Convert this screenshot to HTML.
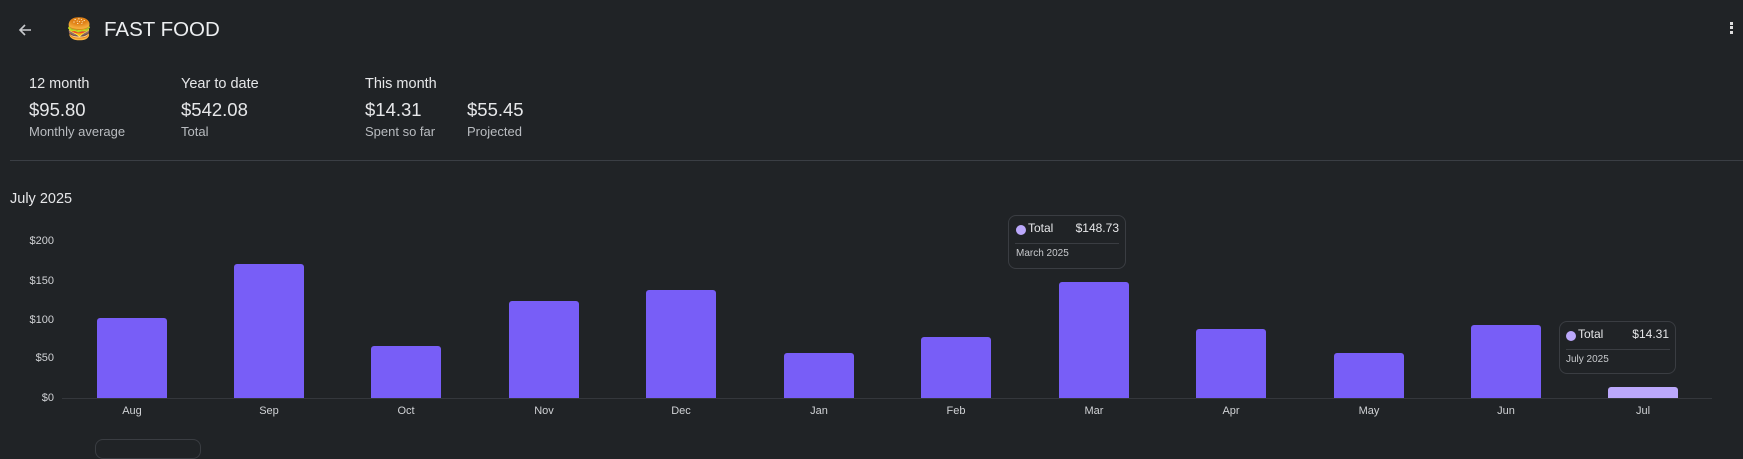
<!DOCTYPE html>
<html><head><meta charset="utf-8"><style>
*{margin:0;padding:0;box-sizing:border-box}
body{width:1743px;height:442px;background:#202326;font-family:"Liberation Sans","DejaVu Sans",sans-serif;color:#e6e7e9;position:relative;overflow:hidden}
.a{position:absolute;white-space:nowrap}
.bar{position:absolute;background:#785ef7;border-radius:3px 3px 0 0;width:70px}
.yl{position:absolute;right:1689px;font-size:11px;color:#d0d2d5;transform:translateY(-50%)}
.xl{position:absolute;font-size:11px;color:#d0d2d5;top:405px;width:70px;text-align:center}
.tt{position:absolute;border:1px solid #3a3d42;border-radius:8px;background:#202326}
.sub{font-size:13px;color:#b9bcc0}
.lab{font-size:14.5px}
.val{font-size:18.5px}
</style></head><body>
<svg class="a" style="left:17px;top:22px" width="16" height="16" viewBox="0 0 16 16"><path d="M14 8H3M8 3L3 8l5 5" stroke="#c8cacd" stroke-width="1.6" fill="none"/></svg>
<div class="a" style="left:66px;top:17px;font-size:21px;font-family:'DejaVu Sans',sans-serif">🍔</div>
<div class="a" style="left:104px;top:18px;font-size:20.5px;color:#eceef0">FAST FOOD</div>
<div class="a" style="left:1730px;top:22px;width:3px;height:3px;background:#ddd"></div>
<div class="a" style="left:1730px;top:26px;width:3px;height:3px;background:#ddd"></div>
<div class="a" style="left:1730px;top:31px;width:3px;height:3px;background:#ddd"></div>

<div class="a lab" style="left:29px;top:76px">12 month</div>
<div class="a val" style="left:29px;top:99px">$95.80</div>
<div class="a sub" style="left:29px;top:124px">Monthly average</div>
<div class="a lab" style="left:181px;top:76px">Year to date</div>
<div class="a val" style="left:181px;top:99px">$542.08</div>
<div class="a sub" style="left:181px;top:124px">Total</div>
<div class="a lab" style="left:365px;top:76px">This month</div>
<div class="a val" style="left:365px;top:99px">$14.31</div>
<div class="a sub" style="left:365px;top:124px">Spent so far</div>
<div class="a val" style="left:467px;top:99px">$55.45</div>
<div class="a sub" style="left:467px;top:124px">Projected</div>
<div class="a" style="left:10px;top:160px;width:1733px;height:1px;background:#3a3e44"></div>
<div class="a lab" style="left:10px;top:191px">July 2025</div>

<div class="yl" style="top:241px">$200</div>
<div class="yl" style="top:281px">$150</div>
<div class="yl" style="top:320px">$100</div>
<div class="yl" style="top:358px">$50</div>
<div class="yl" style="top:398px">$0</div>
<div class="a" style="left:62px;top:398px;width:1650px;height:1px;background:#34373c"></div>

<div class="bar" style="left:97px;top:318px;height:80px"></div>
<div class="bar" style="left:234px;top:264px;height:134px"></div>
<div class="bar" style="left:371px;top:346px;height:52px"></div>
<div class="bar" style="left:509px;top:301px;height:97px"></div>
<div class="bar" style="left:646px;top:290px;height:108px"></div>
<div class="bar" style="left:784px;top:353px;height:45px"></div>
<div class="bar" style="left:921px;top:337px;height:61px"></div>
<div class="bar" style="left:1059px;top:282px;height:116px"></div>
<div class="bar" style="left:1196px;top:329px;height:69px"></div>
<div class="bar" style="left:1334px;top:353px;height:45px"></div>
<div class="bar" style="left:1471px;top:325px;height:73px"></div>
<div class="bar" style="left:1608px;top:387px;height:11px;background:#bba8fb"></div>

<div class="xl" style="left:97px">Aug</div>
<div class="xl" style="left:234px">Sep</div>
<div class="xl" style="left:371px">Oct</div>
<div class="xl" style="left:509px">Nov</div>
<div class="xl" style="left:646px">Dec</div>
<div class="xl" style="left:784px">Jan</div>
<div class="xl" style="left:921px">Feb</div>
<div class="xl" style="left:1059px">Mar</div>
<div class="xl" style="left:1196px">Apr</div>
<div class="xl" style="left:1334px">May</div>
<div class="xl" style="left:1471px">Jun</div>
<div class="xl" style="left:1608px">Jul</div>

<div class="tt" style="left:1008px;top:215px;width:118px;height:54px">
 <div class="a" style="left:7px;top:9px;width:10px;height:10px;border-radius:50%;background:#bba8fb"></div>
 <div class="a" style="left:19px;top:5px;font-size:12px">Total</div>
 <div class="a" style="right:6px;top:5px;font-size:12px">$148.73</div>
 <div class="a" style="left:6px;top:27px;width:104px;height:1px;background:#3a3d42"></div>
 <div class="a" style="left:7px;top:32px;font-size:10px;color:#c8cacd">March 2025</div>
</div>
<div class="tt" style="left:1559px;top:321px;width:117px;height:53px">
 <div class="a" style="left:6px;top:9px;width:10px;height:10px;border-radius:50%;background:#bba8fb"></div>
 <div class="a" style="left:18px;top:5px;font-size:12px">Total</div>
 <div class="a" style="right:6px;top:5px;font-size:12px">$14.31</div>
 <div class="a" style="left:6px;top:27px;width:104px;height:1px;background:#3a3d42"></div>
 <div class="a" style="left:6px;top:32px;font-size:10px;color:#c8cacd">July 2025</div>
</div>
<div class="a" style="left:95px;top:439px;width:106px;height:20px;border:1px solid #3a3d42;border-radius:8px"></div>
</body></html>
